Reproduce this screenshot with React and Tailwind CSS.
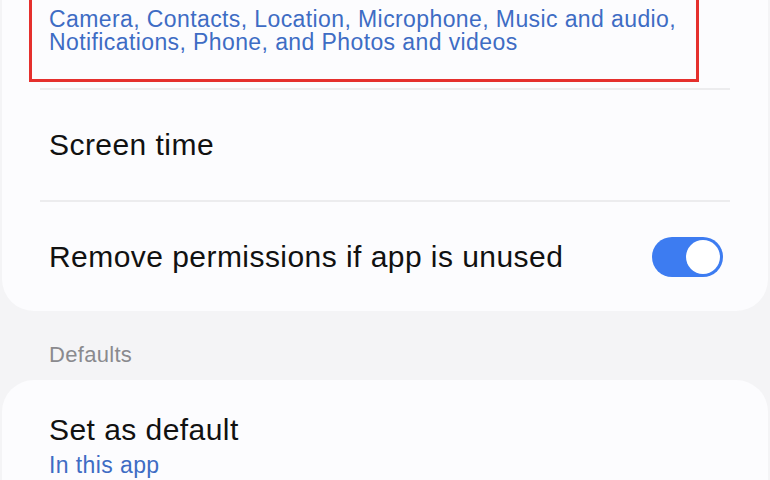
export default function App() {
  const font = { fontFamily: '"Liberation Sans", Arial, sans-serif' };
  return (
    <div className="w-[770px] h-[480px] overflow-hidden bg-[#f4f4f6]" style={font}>
      <div className="-mt-[60px]">
        <div className="mx-[2px] rounded-[32px] bg-[#fcfcfe]">
          <div className="relative pl-[47px] pr-[45px] pt-[30px] pb-[34px]">
            <div className="text-[30px] leading-[38px] tracking-[0.45px] text-[#111111]">Permissions</div>
            <div className="text-[23px] leading-[23px] tracking-[0.4px] text-[#3e6cc4]">
              Camera, Contacts, Location, Microphone, Music and audio,
              <br />
              Notifications, Phone, and Photos and videos
            </div>
            <div className="absolute left-[27px] w-[670px] top-[20px] bottom-[6px] border-[3px] border-[#e5302d]" />
          </div>
          <div className="mx-[38px] h-[2px] bg-[#ececee]" />
          <div className="h-[110px] flex items-center pl-[47px]">
            <span className="text-[30px] leading-[36px] tracking-[0.45px] text-[#111111]">Screen time</span>
          </div>
          <div className="mx-[38px] h-[2px] bg-[#ececee]" />
          <div className="h-[109px] flex items-center justify-between pl-[47px] pr-[45px]">
            <span className="text-[30px] leading-[36px] tracking-[0.45px] text-[#111111]">
              Remove permissions if app is unused
            </span>
            <div className="w-[71px] h-[40px] rounded-full bg-[#3d7cf1] p-[3px] flex justify-end">
              <div className="w-[34px] h-[34px] rounded-full bg-white" />
            </div>
          </div>
        </div>
        <div className="mt-[33px] pl-[49px] text-[22px] leading-[22px] tracking-[0.3px] text-[#8a8a8e]">Defaults</div>
        <div className="mt-[14px] mx-[2px] rounded-[32px] bg-[#fcfcfe] pl-[47px] pt-[32px] pb-[40px]">
          <div className="text-[30px] leading-[36px] tracking-[0.45px] text-[#111111]">Set as default</div>
          <div className="mt-[3px] text-[23px] leading-[28px] tracking-[0.4px] text-[#3e6cc4]">In this app</div>
        </div>
      </div>
    </div>
  );
}
